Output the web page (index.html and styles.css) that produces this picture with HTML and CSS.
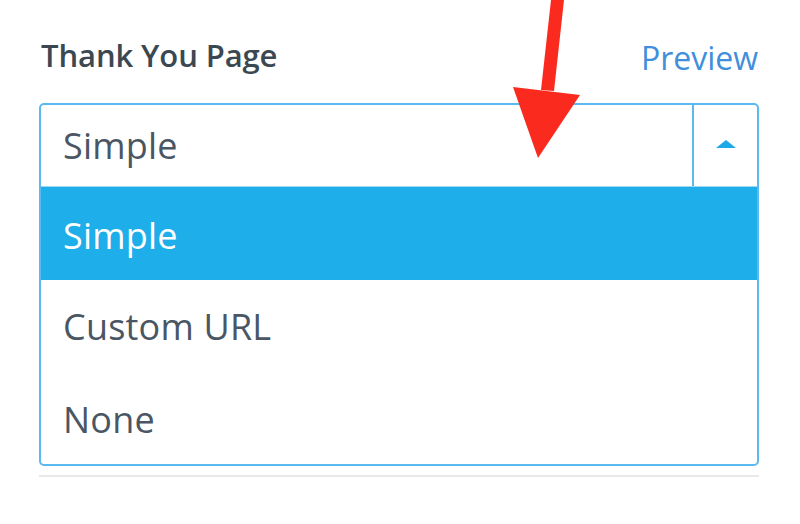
FILE: index.html
```html
<!DOCTYPE html>
<html>
<head>
<meta charset="utf-8">
<link rel="stylesheet" href="styles.css">
</head>
<body>
<div class="panel">
  <div class="field-head">
    <span class="field-label">Thank You Page</span>
    <a class="preview-link">Preview</a>
  </div>
  <div class="dropdown">
    <div class="dropdown-current">
      <span class="current-text">Simple</span>
      <span class="caret-box"><span class="caret"></span></span>
    </div>
    <ul class="options">
      <li class="option selected">Simple</li>
      <li class="option">Custom URL</li>
      <li class="option">None</li>
    </ul>
  </div>
  <div class="divider"></div>
</div>
<svg class="arrow" width="800" height="524" viewBox="0 0 800 524">
  <polygon points="551,0 564,0 554,91 541,90" fill="#fb2a1f"/>
  <polygon points="513,87 580,95 538,158" fill="#fb2a1f"/>
</svg>
</body>
</html>
```
FILE: styles.css
```css
html, body {
  margin: 0;
  padding: 0;
  background: #ffffff;
}
body {
  width: 800px;
  height: 524px;
  overflow: hidden;
  position: relative;
  font-family: "Open Sans", "Liberation Sans", sans-serif;
}
.panel {
  width: 720px;
  padding: 33px 0 0 39px;
}
.field-head {
  display: flex;
  justify-content: space-between;
  align-items: baseline;
  height: 70px;
  padding: 0 1px 0 2px;
}
.field-label {
  font-size: 31px;
  font-weight: 600;
  color: #3b4852;
  letter-spacing: -0.1px;
}
.preview-link {
  font-size: 32px;
  color: #3f8fdc;
  position: relative;
  top: 3px;
}
.dropdown {
  border: 2px solid #5ab9ef;
  border-radius: 5px;
  height: 359px;
  overflow: hidden;
}
.dropdown-current {
  display: flex;
  height: 81px;
  border-bottom: 1px solid #9fd6f4;
}
.current-text {
  flex: 1;
  display: flex;
  align-items: center;
  padding-left: 22px;
  font-size: 36px;
  color: #4a5663;
  letter-spacing: 0.2px;
}
.caret-box {
  width: 63px;
  border-left: 2px solid #5ab9ef;
  display: flex;
  align-items: center;
  justify-content: center;
}
.caret {
  width: 0;
  height: 0;
  border-left: 10px solid transparent;
  border-right: 10px solid transparent;
  border-bottom: 8px solid #1ea9e8;
  margin-bottom: 4px;
}
.options {
  list-style: none;
  margin: 0;
  padding: 0;
}
.option {
  height: 93px;
  display: flex;
  align-items: center;
  padding-left: 22px;
  font-size: 36px;
  color: #4a5663;
  letter-spacing: 0.2px;
}
.option.selected {
  background: #1eaeea;
  color: #ffffff;
  padding-top: 4px;
  height: 89px;
}
.divider {
  margin-top: 9px;
  height: 2px;
  background: #e8e9ea;
}
.arrow {
  position: absolute;
  left: 0;
  top: 0;
}
```
